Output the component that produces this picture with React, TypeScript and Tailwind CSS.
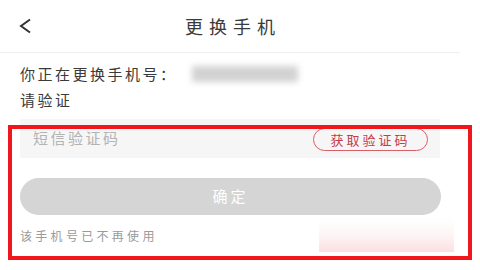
export default function App() {
  const font = { fontFamily: '"Noto Sans CJK SC", "Noto Sans", sans-serif' };
  return (
    <div className="relative w-[480px] h-[270px] bg-white overflow-hidden" style={font}>
      {/* HEADER */}
      <div className="flex items-center h-[53px] w-[460px] border-b border-[#efefef] relative">
        <svg className="ml-[18px]" width="14" height="16" viewBox="0 0 14 16">
          <path d="M12 1.5 L3 8 L12 14.5" fill="none" stroke="#333" strokeWidth="2" />
        </svg>
        <div className="absolute left-[185px] top-[14px] text-[18px] leading-[24px] tracking-[6px] text-[#3a3a3a]">
          更换手机
        </div>
      </div>

      {/* INFO */}
      <div className="px-5 pt-[11px]">
        <div className="flex items-center h-[20px]">
          <span className="text-[15px] tracking-[2.5px] text-[#3a3a3a]">你正在更换手机号：</span>
          <div className="ml-[14px] w-[106px] h-[16px] bg-[#d2d2d2] blur-[3px]"></div>
        </div>
        <div className="mt-[6px] h-[20px] leading-[20px] text-[15px] tracking-[2.5px] text-[#3a3a3a]">请验证</div>

        {/* CODE INPUT */}
        <div className="mt-[9px] w-[420px] h-[39px] bg-[#f6f6f6] flex items-center justify-between pl-[13px] pr-[12px]">
          <span className="text-[15px] tracking-[2.5px] text-[#b3b3b3]">短信验证码</span>
          <div className="w-[115px] h-[23px] mt-[2px] rounded-full border-[1.5px] border-[#d75f6a] flex items-center justify-center text-[13px] tracking-[3px] text-[#c43b4b]">
            获取验证码
          </div>
        </div>

        {/* CONFIRM */}
        <div className="mt-[20px] w-[421px] h-[37px] rounded-full bg-[#d5d5d5] flex items-center justify-center text-[15px] tracking-[3px] text-white">
          确定
        </div>

        {/* FOOTER */}
        <div className="mt-[3px] flex items-center justify-between w-[434px]">
          <span className="text-[12px] tracking-[3.3px] text-[#9a9a9a] mt-[2px]">该手机号已不再使用</span>
          <div className="w-[135px] h-[34px] bg-gradient-to-b from-white via-[#fdf5f5] to-[#fbe0e0]"></div>
        </div>
      </div>

      {/* ANNOTATION BOX */}
      <div className="absolute left-[8px] top-[125px] w-[464px] h-[135px] border-4 border-[#f0161c]"></div>
    </div>
  );
}
